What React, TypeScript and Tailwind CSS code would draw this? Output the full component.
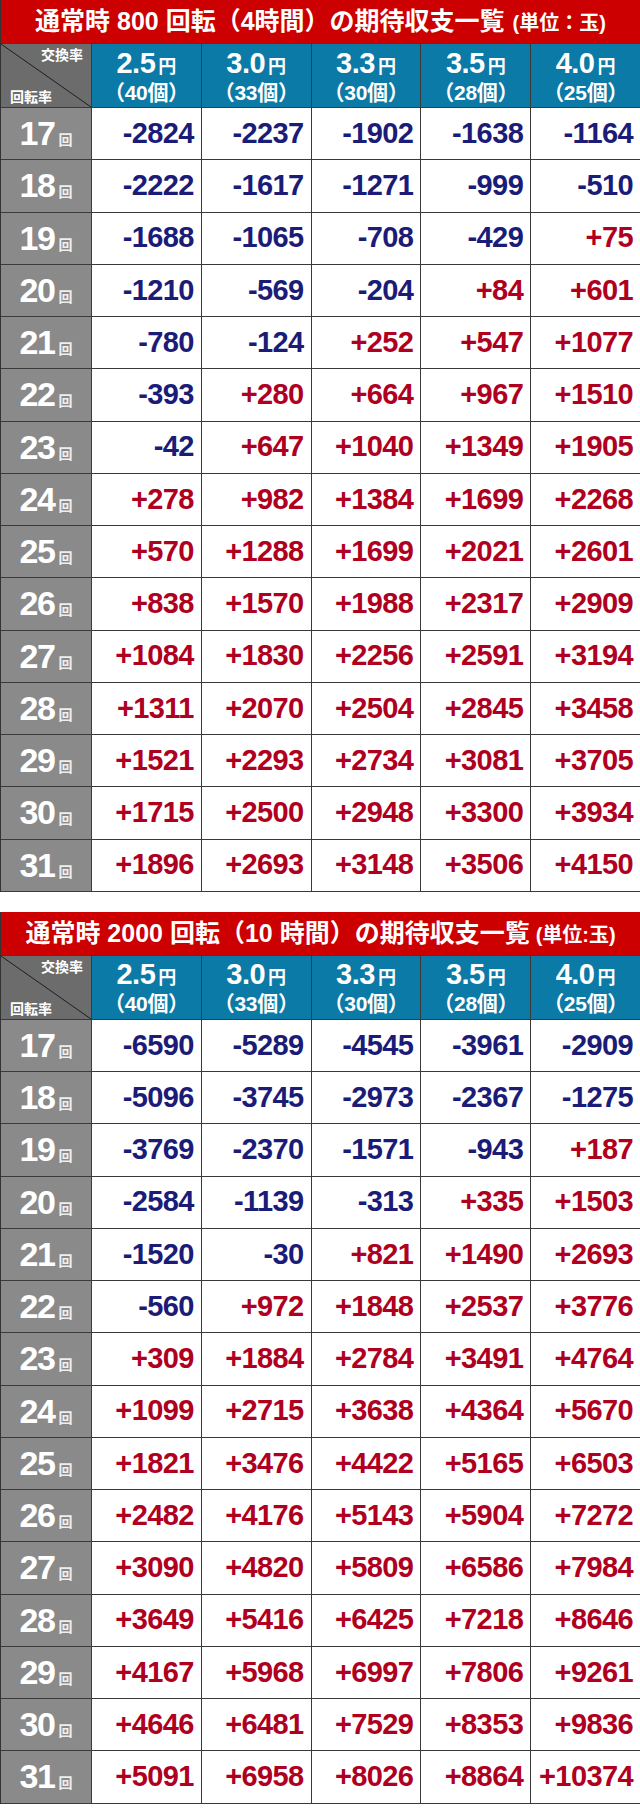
import React from "react";

type Table = {
  title: React.ReactNode;
  data: number[][];
};

const rates = [
  { r: "2.5", n: "40" },
  { r: "3.0", n: "33" },
  { r: "3.3", n: "30" },
  { r: "3.5", n: "28" },
  { r: "4.0", n: "25" },
];

const t1: number[][] = [
  [-2824, -2237, -1902, -1638, -1164],
  [-2222, -1617, -1271, -999, -510],
  [-1688, -1065, -708, -429, 75],
  [-1210, -569, -204, 84, 601],
  [-780, -124, 252, 547, 1077],
  [-393, 280, 664, 967, 1510],
  [-42, 647, 1040, 1349, 1905],
  [278, 982, 1384, 1699, 2268],
  [570, 1288, 1699, 2021, 2601],
  [838, 1570, 1988, 2317, 2909],
  [1084, 1830, 2256, 2591, 3194],
  [1311, 2070, 2504, 2845, 3458],
  [1521, 2293, 2734, 3081, 3705],
  [1715, 2500, 2948, 3300, 3934],
  [1896, 2693, 3148, 3506, 4150],
];

const t2: number[][] = [
  [-6590, -5289, -4545, -3961, -2909],
  [-5096, -3745, -2973, -2367, -1275],
  [-3769, -2370, -1571, -943, 187],
  [-2584, -1139, -313, 335, 1503],
  [-1520, -30, 821, 1490, 2693],
  [-560, 972, 1848, 2537, 3776],
  [309, 1884, 2784, 3491, 4764],
  [1099, 2715, 3638, 4364, 5670],
  [1821, 3476, 4422, 5165, 6503],
  [2482, 4176, 5143, 5904, 7272],
  [3090, 4820, 5809, 6586, 7984],
  [3649, 5416, 6425, 7218, 8646],
  [4167, 5968, 6997, 7806, 9261],
  [4646, 6481, 7529, 8353, 9836],
  [5091, 6958, 8026, 8864, 10374],
];

const font = { fontFamily: '"Liberation Sans", "Noto Sans CJK JP", sans-serif' };

function ExpectTable({ title, data }: Table) {
  return (
    <div className="w-[640px] bg-[#3a3a3a] border-l border-[#333]">
      <div className="h-[43px] bg-[#cc0000] flex items-center justify-center text-white font-bold">
        {title}
      </div>
      <div className="grid grid-cols-[90px_repeat(5,1fr)] gap-px bg-[#3a3a3a] pb-px">
        <div className="relative h-[63px] bg-[#6c6c6c] flex flex-col justify-between px-[10px] pt-[4px] pb-[3px] mt-px">
          <svg className="absolute inset-0 w-full h-full" viewBox="0 0 90 63" preserveAspectRatio="none">
            <line x1="0" y1="0" x2="90" y2="63" stroke="#1e1e1e" strokeWidth="1" />
          </svg>
          <span className="relative self-end text-[14px] font-bold text-white leading-none -mr-[2px]">交換率</span>
          <span className="relative self-start text-[14px] font-bold text-white leading-none -ml-[1px]">回転率</span>
        </div>
        {rates.map((x) => (
          <div key={x.r} className="h-[63px] mt-px bg-[#0b7aa6] flex flex-col items-center justify-center text-white font-bold">
            <div className="flex items-baseline leading-none">
              <span className="text-[29px] tracking-[-0.5px]">{x.r}</span>
              <span className="text-[18px] ml-[3px]">円</span>
            </div>
            <div className="text-[21px] leading-none mt-[4px] tracking-[-0.3px]">（{x.n}個）</div>
          </div>
        ))}
        {data.map((row, i) => (
          <React.Fragment key={i}>
            <div className="h-[51.25px] bg-[#8a8a8a] flex items-baseline justify-center pt-[8px] text-white font-bold">
              <span className="text-[34px] leading-none tracking-[-1.5px]">{17 + i}</span>
              <span className="text-[14px] leading-none ml-[4px] text-[#eeeeee]">回</span>
            </div>
            {row.map((v, j) => (
              <div
                key={j}
                className={
                  "h-[51.25px] bg-white flex items-center justify-end pr-[7px] text-[29px] font-bold tracking-[-0.6px] " +
                  (v < 0 ? "text-[#1b1b78]" : "text-[#b0001f]")
                }
              >
                {v > 0 ? "+" + v : String(v)}
              </div>
            ))}
          </React.Fragment>
        ))}
      </div>
    </div>
  );
}

export default function App() {
  return (
    <div className="w-[640px] h-[1814px] bg-white" style={font}>
      <ExpectTable
        title={
          <div className="flex items-baseline">
            <span className="text-[25px]">通常時 800 回転（4時間）の期待収支一覧</span>
            <span className="text-[20px] ml-[8px]">(単位：玉)</span>
          </div>
        }
        data={t1}
      />
      <div className="h-[20px]" />
      <ExpectTable
        title={
          <div className="flex items-baseline">
            <span className="text-[25px]">通常時 2000 回転（10 時間）の期待収支一覧</span>
            <span className="text-[20px] ml-[6px]">(単位:玉)</span>
          </div>
        }
        data={t2}
      />
    </div>
  );
}
